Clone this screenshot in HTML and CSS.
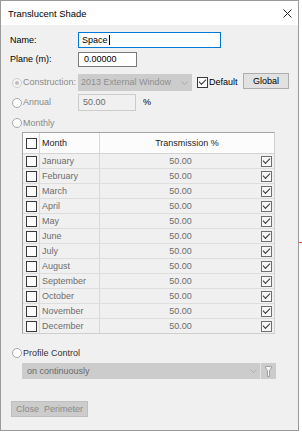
FILE: index.html
```html
<!doctype html>
<html lang="en">
<head>
  <meta charset="UTF-8">
  <title>Translucent Shade</title>
  <link rel="stylesheet" href="styles.css">
</head>
<body>

  <div class="window">
    <div class="titlebar">
      <span class="title">Translucent Shade</span>
      <svg class="close" width="9" height="9" viewBox="0 0 9 9"><path d="M0.5 0.5 L8.5 8.5 M8.5 0.5 L0.5 8.5" stroke="#222" stroke-width="1" fill="none"/></svg>
    </div>

    <div class="content">
      <div class="row row-name">
        <span class="lbl">Name:</span>
        <div class="field field-name">Space<span class="caret"></span></div>
      </div>

      <div class="row row-plane">
        <span class="lbl">Plane (m):</span>
        <div class="field field-plane">0.00000</div>
      </div>

      <div class="row row-cons">
        <span class="opt"><span class="radio dis on"></span><span class="dim">Construction:</span></span>
        <div class="combo combo-cons">
          <span>2013 External Window</span>
          <svg class="chev" width="7" height="4" viewBox="0 0 7 4"><path d="M0.5 0.5 L3.5 3.5 L6.5 0.5" stroke="#a8a8a8" fill="none"/></svg>
        </div>
        <span class="box dark on"></span>
        <span class="default">Default</span>
        <span class="btn">Global</span>
      </div>

      <div class="row row-annual">
        <span class="opt"><span class="radio"></span><span class="dim">Annual</span></span>
        <div class="field field-dis">50.00</div>
        <span class="pct">%</span>
      </div>

      <div class="row row-monthly">
        <span class="radio"></span><span class="dim">Monthly</span>
      </div>

      <div class="grid">
        <div class="grid-head">
          <div class="cell cell-chk"><span class="box dark"></span></div>
          <div class="cell cell-month">Month</div>
          <div class="cell cell-trans">Transmission %</div>
        </div>
        <div class="grid-row">
          <div class="cell cell-chk"><span class="box dark"></span></div>
          <div class="cell cell-month">January</div>
          <div class="cell cell-val"><span class="val">50.00</span><span class="box on"></span></div>
        </div>
        <div class="grid-row">
          <div class="cell cell-chk"><span class="box dark"></span></div>
          <div class="cell cell-month">February</div>
          <div class="cell cell-val"><span class="val">50.00</span><span class="box on"></span></div>
        </div>
        <div class="grid-row">
          <div class="cell cell-chk"><span class="box dark"></span></div>
          <div class="cell cell-month">March</div>
          <div class="cell cell-val"><span class="val">50.00</span><span class="box on"></span></div>
        </div>
        <div class="grid-row">
          <div class="cell cell-chk"><span class="box dark"></span></div>
          <div class="cell cell-month">April</div>
          <div class="cell cell-val"><span class="val">50.00</span><span class="box on"></span></div>
        </div>
        <div class="grid-row">
          <div class="cell cell-chk"><span class="box dark"></span></div>
          <div class="cell cell-month">May</div>
          <div class="cell cell-val"><span class="val">50.00</span><span class="box on"></span></div>
        </div>
        <div class="grid-row">
          <div class="cell cell-chk"><span class="box dark"></span></div>
          <div class="cell cell-month">June</div>
          <div class="cell cell-val"><span class="val">50.00</span><span class="box on"></span></div>
        </div>
        <div class="grid-row">
          <div class="cell cell-chk"><span class="box dark"></span></div>
          <div class="cell cell-month">July</div>
          <div class="cell cell-val"><span class="val">50.00</span><span class="box on"></span></div>
        </div>
        <div class="grid-row">
          <div class="cell cell-chk"><span class="box dark"></span></div>
          <div class="cell cell-month">August</div>
          <div class="cell cell-val"><span class="val">50.00</span><span class="box on"></span></div>
        </div>
        <div class="grid-row">
          <div class="cell cell-chk"><span class="box dark"></span></div>
          <div class="cell cell-month">September</div>
          <div class="cell cell-val"><span class="val">50.00</span><span class="box on"></span></div>
        </div>
        <div class="grid-row">
          <div class="cell cell-chk"><span class="box dark"></span></div>
          <div class="cell cell-month">October</div>
          <div class="cell cell-val"><span class="val">50.00</span><span class="box on"></span></div>
        </div>
        <div class="grid-row">
          <div class="cell cell-chk"><span class="box dark"></span></div>
          <div class="cell cell-month">November</div>
          <div class="cell cell-val"><span class="val">50.00</span><span class="box on"></span></div>
        </div>
        <div class="grid-row">
          <div class="cell cell-chk"><span class="box dark"></span></div>
          <div class="cell cell-month">December</div>
          <div class="cell cell-val"><span class="val">50.00</span><span class="box on"></span></div>
        </div>
      </div>

      <div class="row row-profile">
        <span class="radio"></span><span class="profile-lbl">Profile Control</span>
      </div>

      <div class="combo combo-profile">
        <span>on continuously</span>
        <svg class="chev" width="7" height="4" viewBox="0 0 7 4"><path d="M0.5 0.5 L3.5 3.5 L6.5 0.5" stroke="#b0b0b0" fill="none"/></svg>
        <span class="sep"></span>
        <svg class="filter" width="7" height="11" viewBox="0 0 7 11"><path d="M0.5 0.5 H6.5 V2 L4.5 4.5 V10.5 H2.5 V4.5 L0.5 2 Z" stroke="#a0a0a0" fill="#f4f4f4"/></svg>
      </div>

      <span class="btn btn-dis">Close&nbsp; Perimeter</span>
    </div>
  </div>

  <span class="mark"></span>

</body>
</html>
```

FILE: styles.css
```css
html, body {
  margin: 0;
  padding: 0;
}
body {
  position: relative;
  background: #fff;
  color: #000;
  font-family: "Liberation Sans", Arial, sans-serif;
  font-size: 9px;
  line-height: 11px;
}
.window {
  display: flex;
  flex-direction: column;
  width: 297px;
  height: 429px;
  border: 1px solid #9a9a9a;
  background: #f0f0f0;
}
.titlebar {
  display: flex;
  align-items: center;
  justify-content: space-between;
  height: 24px;
  padding: 1px 6px 0 7px;
  box-sizing: border-box;
  background: #fff;
}
.title {
  font-size: 9.4px;
}
.content {
  display: flex;
  flex-direction: column;
  align-items: flex-start;
  padding: 7px 9px 0;
}
.row {
  display: flex;
  align-items: center;
  align-self: stretch;
}
.lbl {
  width: 68px;
}
.dim {
  color: #8a8a8a;
}

/* text boxes */
.field {
  display: flex;
  align-items: center;
  box-sizing: border-box;
  background: #fff;
}
.row-name {
  height: 16px;
}
.field-name {
  width: 143px;
  height: 16px;
  padding-left: 3px;
  border: 1px solid #0078d7;
}
.caret {
  width: 1px;
  height: 10px;
  margin-left: 1px;
  background: #000;
}
.row-plane {
  height: 15px;
  margin-top: 4px;
}
.field-plane {
  width: 59px;
  height: 15px;
  padding-left: 5px;
  border: 1px solid #7a7a7a;
}
.row-annual {
  height: 17px;
  margin-top: 3px;
}
.field-dis {
  width: 58px;
  height: 17px;
  padding-left: 4px;
  border: 1px solid #cccccc;
  background: #f0f0f0;
  color: #6d6d6d;
}
.pct {
  margin-left: 7px;
}

/* radios and checkboxes */
.opt {
  display: flex;
  align-items: center;
  width: 68px;
}
.radio {
  display: flex;
  align-items: center;
  justify-content: center;
  width: 10px;
  height: 10px;
  margin: 0 1px 0 2px;
  box-sizing: border-box;
  border: 1px solid #a8a8a8;
  border-radius: 50%;
  background: #fff;
}
.radio.dis {
  border-color: #cdcdcd;
  background: #f4f4f4;
}
.radio.on::after {
  content: '';
  width: 4px;
  height: 4px;
  border-radius: 50%;
  background: #bdbdbd;
}
.box {
  position: relative;
  display: block;
  width: 11px;
  height: 11px;
  box-sizing: border-box;
  border: 1px solid #6e6e6e;
  background: #f7f7f7;
}
.box.dark {
  border-color: #3a3a3a;
  background: #fdfdfd;
}
.box.on::after {
  content: '';
  position: absolute;
  left: 1px;
  top: 1px;
  width: 6px;
  height: 3px;
  border-left: 1px solid #333;
  border-bottom: 1px solid #333;
  transform: rotate(-45deg);
}

/* construction row */
.row-cons {
  height: 17px;
  margin-top: 7px;
}
.combo {
  display: flex;
  align-items: center;
  box-sizing: border-box;
  background: #cccccc;
}
.combo-cons {
  width: 114px;
  height: 17px;
  padding-left: 3px;
  color: #8e8e8e;
}
.chev {
  margin-left: auto;
  margin-right: 4px;
}
.row-cons .box {
  margin-left: 5px;
}
.default {
  margin-left: 1px;
}
.btn {
  display: flex;
  align-items: center;
  justify-content: center;
  height: 16px;
  box-sizing: border-box;
  border: 1px solid #adadad;
  background: #e1e1e1;
}
.row-cons .btn {
  width: 46px;
  margin-left: auto;
  align-self: flex-start;
  margin-top: -1px;
}

.row-monthly {
  height: 12px;
  margin-top: 6px;
}

/* month table */
.grid {
  width: 253px;
  margin: 3px 0 0 12px;
  box-sizing: border-box;
  border: 1px solid #a3a3a3;
  border-right-color: #cfcfcf;
  border-bottom-color: #cfcfcf;
}
.grid-head,
.grid-row {
  display: grid;
  grid-template-columns: 17px 60px 174px;
  box-sizing: border-box;
}
.grid-head {
  height: 21px;
  background: #fcfcfc;
  border-bottom: 1px solid #d4d4d4;
  color: #1c1c1c;
}
.grid-row {
  height: 15px;
  border-bottom: 1px solid #dddddd;
  color: #6d6d6d;
}
.grid-row:last-child {
  border-bottom: 0;
  height: 14px;
}
.cell {
  display: flex;
  align-items: center;
  box-sizing: border-box;
}
.cell-chk,
.cell-month {
  border-right: 1px solid #d8d8d8;
}
.cell-chk {
  justify-content: center;
}
.cell-month {
  padding-left: 2px;
}
.cell-trans {
  justify-content: center;
}
.cell-val {
  padding-right: 2px;
}
.val {
  flex: 1;
  text-align: center;
}

/* profile */
.row-profile {
  height: 12px;
  margin-top: 13px;
}
.profile-lbl {
  color: #333;
}
.combo-profile {
  width: 254px;
  height: 16px;
  margin: 4px 0 0 12px;
  padding-left: 5px;
  color: #6a6a6a;
}
.combo-profile .chev {
  margin-right: 3px;
}
.sep {
  align-self: stretch;
  width: 1px;
  background: #e2e2e2;
}
.filter {
  margin: 0 4px 0 4px;
}
.btn-dis {
  width: 77px;
  margin: 22px 0 0 1px;
  border-color: #bfbfbf;
  background: #cccccc;
  color: #8a8a8a;
}

.mark {
  position: absolute;
  left: 299px;
  top: 242px;
  width: 3px;
  height: 1px;
  background: #e8453c;
}
```
